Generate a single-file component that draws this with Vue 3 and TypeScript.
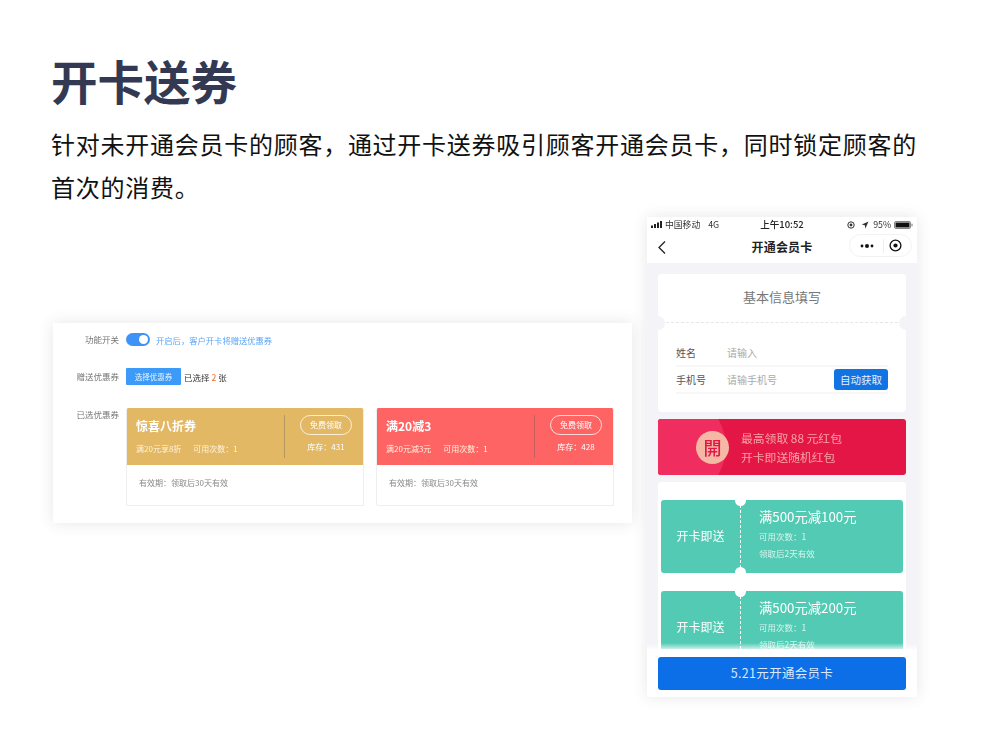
<template>
  <div class="page">
    <h1 class="title">开卡送券</h1>
    <p class="desc">针对未开通会员卡的顾客，通过开卡送券吸引顾客开通会员卡，同时锁定顾客的首次的消费。</p>

    <div class="shots">
      <!-- backend settings screenshot -->
      <section class="admin">
        <div class="row row-switch">
          <span class="label">功能开关</span>
          <span class="toggle"><i></i></span>
          <span class="hint">开启后，客户开卡将赠送优惠券</span>
        </div>
        <div class="row row-pick">
          <span class="label">赠送优惠券</span>
          <span class="pick-btn">选择优惠券</span>
          <span class="picked">已选择 <b>2</b> 张</span>
        </div>
        <div class="row row-coupons">
          <span class="label">已选优惠券</span>
          <div class="coupons">
            <div v-for="c in coupons" :key="c.name" class="coupon">
              <div class="coupon-head" :class="c.tone">
                <div class="coupon-main">
                  <strong>{{ c.name }}</strong>
                  <p><span>{{ c.rule }}</span><span>可用次数：1</span></p>
                </div>
                <div class="coupon-side">
                  <span class="pill">免费领取</span>
                  <span class="stock">库存：{{ c.stock }}</span>
                </div>
              </div>
              <div class="coupon-foot">有效期：领取后30天有效</div>
            </div>
          </div>
        </div>
      </section>

      <!-- phone screenshot -->
      <section class="phone">
        <div class="status">
          <span class="status-left">
            <svg width="13" height="7" viewBox="0 0 13 7"><rect x="0" y="4.5" width="2" height="2.5" fill="#222"/><rect x="3" y="3" width="2" height="4" fill="#222"/><rect x="6" y="1.5" width="2" height="5.5" fill="#222"/><rect x="9" y="0" width="2" height="7" fill="#222"/></svg>
            中国移动<em>4G</em>
          </span>
          <span class="clock">上午10:52</span>
          <span class="status-right">
            <svg width="8" height="8" viewBox="0 0 8 8"><circle cx="4" cy="4" r="3.2" fill="none" stroke="#333" stroke-width="1"/><circle cx="4" cy="4" r="1.4" fill="#333"/></svg>
            <svg class="arrow" width="8" height="8" viewBox="0 0 8 8"><path d="M7.5.5 .8 3.6l3 .6.6 3.2z" fill="#333"/></svg>
            95%
            <svg width="19" height="8" viewBox="0 0 19 8"><rect x=".5" y=".5" width="16" height="7" rx="1.5" fill="none" stroke="#555" stroke-width=".7"/><rect x="1.5" y="1.5" width="14" height="5" fill="#111"/><rect x="17.5" y="2.7" width="1" height="2.6" fill="#777"/></svg>
          </span>
        </div>
        <div class="nav">
          <svg class="back" width="10" height="15" viewBox="0 0 10 15"><path d="M8 1.5 2 7.5l6 6" fill="none" stroke="#222" stroke-width="1.3"/></svg>
          <span class="nav-title">开通会员卡</span>
          <div class="capsule">
            <svg width="14" height="6" viewBox="0 0 14 6"><circle cx="2" cy="3" r="1.4" fill="#111"/><circle cx="7" cy="3" r="2" fill="#111"/><circle cx="12" cy="3" r="1.4" fill="#111"/></svg>
            <i></i>
            <svg width="13" height="13" viewBox="0 0 13 13"><circle cx="6.5" cy="6.5" r="5.4" fill="none" stroke="#111" stroke-width="1.3"/><circle cx="6.5" cy="6.5" r="2.1" fill="#111"/></svg>
          </div>
        </div>

        <div class="phone-body">
          <div class="info">
            <div class="info-title">基本信息填写</div>
            <div class="info-form">
              <div class="field"><span>姓名</span><em>请输入</em></div>
              <div class="field"><span>手机号</span><em>请输手机号</em><b>自动获取</b></div>
            </div>
          </div>

          <div class="packet">
            <span class="seal">開</span>
            <div class="packet-text">
              <p>最高领取 88 元红包</p>
              <p>开卡即送随机红包</p>
            </div>
          </div>

          <div class="tickets">
            <div v-for="t in tickets" :key="t" class="ticket">
              <div class="ticket-left">开卡即送</div>
              <div class="ticket-right">
                <strong>{{ t }}</strong>
                <p>可用次数：1</p>
                <p>领取后2天有效</p>
              </div>
            </div>
          </div>
        </div>

        <div class="buy">
          <div class="buy-btn">5.21元开通会员卡</div>
        </div>
      </section>
    </div>
  </div>
</template>

<script setup lang="ts">
const coupons = [
  { name: "惊喜八折券", rule: "满20元享8折", stock: 431, tone: "gold" },
  { name: "满20减3", rule: "满20元减3元", stock: 428, tone: "red" },
];

const tickets = ["满500元减100元", "满500元减200元"];
</script>

<style>
html,
body {
  background: #fff;
}
</style>

<style scoped>
.page {
  width: 1000px;
  height: 739px;
  box-sizing: border-box;
  padding: 47px 0 0 51px;
  overflow: hidden;
  background: #fff;
  font-family: "Noto Sans CJK SC", "Noto Sans", sans-serif;
}
.title {
  margin: 0;
  font-size: 46.5px;
  line-height: 66px;
  font-weight: 700;
  color: #333952;
}
.desc {
  width: 880px;
  margin: 9px 0 0;
  font-size: 24px;
  line-height: 43px;
  letter-spacing: 0.74px;
  color: #111;
}

.shots {
  display: flex;
  align-items: flex-start;
  gap: 15px;
  margin: 9px 0 0 2px;
}

/* backend card */
.admin {
  width: 579px;
  height: 200px;
  margin-top: 106px;
  box-sizing: border-box;
  padding: 10px 18px 0 0;
  background: #fff;
  box-shadow: 0 0 14px rgba(60, 60, 80, 0.13);
  filter: blur(0.35px);
  font-size: 8.5px;
}
.row {
  display: flex;
  align-items: center;
}
.row-pick {
  margin-top: 22px;
}
.row-coupons {
  align-items: flex-start;
  margin-top: 23px;
}
.label {
  width: 66px;
  flex: none;
  margin-right: 7px;
  text-align: right;
  line-height: 13px;
  color: #777;
}
.toggle {
  position: relative;
  width: 24px;
  height: 13px;
  border-radius: 7px;
  background: #3d93f7;
}
.toggle i {
  position: absolute;
  top: 2px;
  right: 2px;
  width: 9px;
  height: 9px;
  border-radius: 50%;
  background: #fff;
}
.hint {
  margin-left: 6px;
  font-size: 8.3px;
  color: #5ba6f8;
}
.pick-btn {
  width: 55px;
  height: 17px;
  line-height: 17px;
  text-align: center;
  border-radius: 1px;
  background: #3c9bf9;
  color: #e8f3ff;
  font-size: 7.5px;
}
.picked {
  margin-left: 3px;
  color: #333;
}
.picked b {
  font-weight: 500;
  color: #f4793b;
}
.coupons {
  display: flex;
  gap: 12px;
}
.coupon {
  width: 238px;
  height: 98px;
  box-sizing: border-box;
  border: 1px solid #eee;
  border-top: 0;
  border-radius: 2px;
  overflow: hidden;
  background: #fff;
}
.coupon-head {
  display: flex;
  height: 57px;
  box-sizing: border-box;
  padding: 7px 0 7px 10px;
  margin: 0 -1px;
  color: #fff;
}
.gold {
  background: #e2b865;
}
.red {
  background: #ff6464;
}
.coupon-main {
  width: 148px;
  flex: none;
  border-right: 1px solid rgba(90, 90, 90, 0.35);
}
.coupon-main strong {
  display: block;
  font-size: 12px;
  line-height: 22px;
}
.coupon-main p {
  display: flex;
  gap: 12px;
  margin: 6px 0 0;
  font-size: 8px;
  line-height: 12px;
  color: #fff3dc;
}
.coupon-side {
  flex: 1;
  display: flex;
  flex-direction: column;
  align-items: center;
  margin-left: 15px;
  margin-right: 12px;
}
.pill {
  width: 52px;
  height: 20px;
  box-sizing: border-box;
  border: 1px solid rgba(255, 255, 255, 0.75);
  border-radius: 10px;
  text-align: center;
  font-size: 8px;
  line-height: 18px;
}
.stock {
  margin-top: 6px;
  font-size: 8px;
  line-height: 12px;
}
.coupon-foot {
  padding: 12px 0 0 12px;
  font-size: 8px;
  line-height: 12px;
  color: #888;
}

/* phone */
.phone {
  position: relative;
  width: 270px;
  height: 480px;
  overflow: hidden;
  background: #f4f4f8;
  box-shadow: 0 0 14px rgba(60, 60, 80, 0.12);
  filter: blur(0.35px);
}
.status {
  display: grid;
  grid-template-columns: 1fr auto 1fr;
  align-items: center;
  height: 15px;
  padding: 0 4px;
  background: #fff;
  font-size: 8.8px;
  color: #333;
}
.status-left {
  display: flex;
  align-items: center;
  gap: 1px;
}
.status-left em {
  margin-left: 7px;
  font-style: normal;
}
.clock {
  margin-top: -1px;
  font-size: 9.5px;
  font-weight: 500;
  color: #222;
}
.status-right {
  display: flex;
  align-items: center;
  justify-content: flex-end;
  gap: 3px;
}
.arrow {
  margin: 0 1px 0 3px;
}
.nav {
  position: relative;
  height: 31px;
  box-sizing: border-box;
  padding-bottom: 3px;
  display: flex;
  align-items: center;
  justify-content: center;
  background: #fff;
}
.back {
  position: absolute;
  left: 10px;
  top: 8px;
}
.nav-title {
  font-size: 12px;
  font-weight: 700;
  color: #222;
  letter-spacing: 0.2px;
}
.capsule {
  position: absolute;
  right: 5px;
  top: 2px;
  width: 63px;
  height: 23px;
  box-sizing: border-box;
  display: flex;
  align-items: center;
  justify-content: space-between;
  padding: 0 9px 0 10px;
  border: 1px solid #f2f2f2;
  border-radius: 12px;
}
.capsule i {
  width: 1px;
  height: 14px;
  margin-left: 4px;
  background: #eee;
}
.phone-body {
  padding: 11px 11px 0;
}
.info {
  position: relative;
  height: 138px;
  border-radius: 4px;
  background: #fff;
}
.info::before,
.info::after {
  content: "";
  position: absolute;
  top: 42px;
  width: 14px;
  height: 14px;
  border-radius: 50%;
  background: #f4f4f8;
}
.info::before {
  left: -7px;
}
.info::after {
  right: -7px;
}
.info-title {
  height: 49px;
  box-sizing: border-box;
  padding-top: 13px;
  margin: 0 8px;
  border-bottom: 1px dashed #e6e6e6;
  text-align: center;
  font-size: 13px;
  line-height: 20px;
  color: #777;
}
.info-form {
  padding: 18px 18px 0;
}
.field {
  display: flex;
  align-items: center;
  height: 26px;
  box-sizing: border-box;
  padding-bottom: 2px;
  border-bottom: 2px solid #f7f7f7;
  font-size: 10px;
  color: #555;
}
.field + .field {
  height: 27px;
  padding-bottom: 1px;
}
.field span {
  width: 51px;
}
.field em {
  flex: 1;
  font-style: normal;
  color: #aaa;
}
.field b {
  width: 54px;
  height: 21px;
  line-height: 21px;
  text-align: center;
  border-radius: 3px;
  font-weight: 400;
  color: #e6f0ff;
  background: #1273e2;
  font-size: 10.5px;
}
.packet {
  position: relative;
  display: flex;
  align-items: center;
  height: 56px;
  margin-top: 7px;
  overflow: hidden;
  border-radius: 3px;
  background: #e41645;
}
.packet::before {
  content: "";
  position: absolute;
  left: -110px;
  top: -40px;
  width: 178px;
  height: 136px;
  border-radius: 50%;
  background: #ef2d5e;
}
.seal {
  position: relative;
  width: 33px;
  height: 33px;
  margin-left: 38px;
  border-radius: 50%;
  background: #f4b8a5;
  text-align: center;
  color: #e41645;
  font-size: 18px;
  font-weight: 500;
  line-height: 33px;
}
.packet-text {
  position: relative;
  margin-left: 12px;
  color: #f7a3a3;
  font-size: 11.8px;
  line-height: 19px;
}
.packet-text p {
  margin: 0;
}
.tickets {
  height: 230px;
  margin-top: 7px;
  box-sizing: border-box;
  padding: 18px 3px 0;
  border-radius: 4px;
  background: #fff;
}
.ticket {
  position: relative;
  display: flex;
  height: 73px;
  margin-bottom: 18px;
  border-radius: 3px;
  overflow: hidden;
  background: #53cbb4;
  color: #fff;
}
.ticket::before,
.ticket::after {
  content: "";
  position: absolute;
  left: 74px;
  width: 11px;
  height: 11px;
  border-radius: 50%;
  background: #fff;
}
.ticket::before {
  top: -5px;
}
.ticket::after {
  bottom: -5px;
}
.ticket-left {
  width: 80px;
  box-sizing: border-box;
  flex: none;
  border-right: 1px dashed #fff;
  text-align: center;
  font-size: 12px;
  line-height: 72px;
}
.ticket-right {
  padding: 7px 0 0 18px;
}
.ticket-right strong {
  display: block;
  font-size: 13.3px;
  font-weight: 400;
  line-height: 20px;
}
.ticket-right p {
  margin: 0;
  font-size: 8.5px;
  line-height: 17px;
  color: #d8f4ee;
}
.ticket-right strong + p {
  margin-top: 1px;
}
.buy {
  position: absolute;
  left: 0;
  right: 0;
  bottom: 0;
  height: 48px;
  padding: 8px 11px 0;
  box-sizing: border-box;
  background: #fff;
}
.buy::before {
  content: "";
  position: absolute;
  left: 0;
  right: 0;
  top: -6px;
  height: 6px;
  background: linear-gradient(rgba(255, 255, 255, 0), rgba(255, 255, 255, 0.7));
}
.buy-btn {
  height: 33px;
  line-height: 32px;
  text-align: center;
  border-radius: 3px;
  background: #0c6fe8;
  color: #d9e9ff;
  font-size: 12.5px;
  letter-spacing: 0.3px;
}
</style>
